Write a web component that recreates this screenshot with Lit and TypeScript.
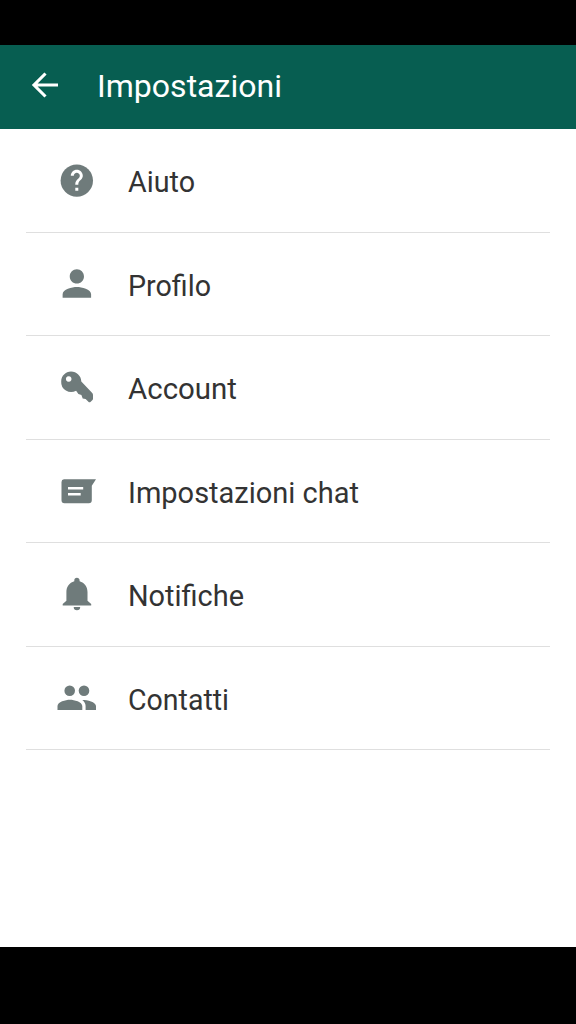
import { LitElement, html, css, svg } from "lit";
import { customElement } from "lit/decorators.js";

const rows = [
  { label: "Aiuto", w: 67, icon: svg`<circle cx="26.8" cy="26.600" r="16.200"/><path class="mark" transform="translate(8.8 8.300) scale(1.5)" d="M13 19h-2v-2h2v2zm2.070-7.750l-.9.920C13.450 12.900 13 13.500 13 15h-2v-.5c0-1.100.450-2.100 1.170-2.830l1.240-1.260c.370-.360.590-.860.590-1.410 0-1.100-.9-2-2-2s-2 .9-2 2H8c0-2.210 1.790-4 4-4s4 1.790 4 4c0 .880-.360 1.680-.930 2.250z"/>` },
  { label: "Profilo", w: 83, icon: svg`<path transform="translate(5.500 4.200) scale(1.780)" d="M12 12c2.210 0 4-1.790 4-4s-1.790-4-4-4-4 1.790-4 4 1.790 4 4 4zm0 2c-2.670 0-8 1.340-8 4v2h16v-2c0-2.660-5.330-4-8-4z"/>` },
  { label: "Account", w: 109, icon: svg`<path fill-rule="evenodd" d="M21 10.600c5.600 0 10.300 4.400 10.300 10L42 31.700q1 1 1 2.300v3.500q0 1.300-1 2l-1.300 1.300q-1.300 1-2.300 0L35.600 37.900l-2.900-.5-1.300-3.500-3-.9-2.300-3.300A10 10 0 0 1 11.200 20.400c0-5.400 4.400-9.800 9.800-9.800zM18.700 15.200a2.800 2.800 0 1 0 .01 0z"/>` },
  { label: "Impostazioni chat", w: 231, icon: svg`<path fill-rule="evenodd" d="M14 14.200H46L41.800 20.800V35.200a3 3 0 0 1-3 3H14.500a3 3 0 0 1-3-3V17a2.800 2.800 0 0 1 2.500-2.800zM18 22v2.500h15.200V22zM18 27.900v2.500h12.700v-2.500z"/>` },
  { label: "Notifiche", w: 116, icon: svg`<path d="M26.900 9.700c1.600 0 2.700 1.100 2.700 2.700v.8c5 1.500 7.900 5.500 7.900 10.800v8.700l3.700 3.300v1.500H12.700V36l3.700-3.300V24c0-5.300 2.900-9.300 7.900-10.800v-.8c0-1.600 1-2.700 2.600-2.700zM23.700 39h6.500a3.250 3.250 0 0 1-6.500 0z"/>` },
  { label: "Contatti", w: 101, icon: svg`<circle cx="19.700" cy="18.700" r="5.300"/><circle cx="34" cy="18.700" r="5.300"/><path d="M7.500 38.100v-4c0-4.300 8.200-6.400 12.400-6.400s12.400 2.100 12.400 6.400v4zM35.600 38.100v-4c0-2.700-1.300-4.700-3.300-6.200 5 0 13.700 1.900 13.700 6.200v4z"/>` },
];

@customElement("app-root")
export class AppRoot extends LitElement {
  static styles = css`
    :host { display: flex; flex-direction: column; height: 1024px; background: #fff; font-family: Roboto, sans-serif; overflow: hidden; }
    .top { height: 45px; background: #000; flex: none; }
    .bar { height: 84px; background: #075e51; display: flex; align-items: center; flex: none; }
    .back { width: 28px; height: 28px; margin-left: 31px; margin-right: 37.500px; margin-top: -4px; }
    .text { height: 48px; overflow: visible; }
    .title { font-size: 32px; fill: #fff; }
    .list { flex: 1; padding: 0 26px; }
    .row { box-sizing: border-box; height: 103.500px; border-bottom: 1px solid #dfdfdf; display: flex; align-items: center; }
    .icon { width: 52px; height: 52px; margin-left: 24px; margin-right: 26px; fill: #6f7b7b; }
    .mark { fill: #fff; }
    .label { font-size: 29px; fill: #333; }
    .bottom { height: 77px; background: #000; flex: none; }
  `;
  render() {
    return html`
      <div class="top"></div>
      <header class="bar">
        <svg class="back" viewBox="0 0 28 28" fill="none" stroke="#fff" stroke-width="3.100"><path d="M27 14H3M14.500 2.500L3 14L14.500 25.500"/></svg>
        <svg class="text" width="200" height="48"><text class="title" x="0" y="34" textLength="185" lengthAdjust="spacingAndGlyphs">Impostazioni</text></svg>
      </header>
      <main class="list">
        ${rows.map((r) => html`<div class="row">
          <svg class="icon" viewBox="0 0 52 52">${r.icon}</svg>
          <svg class="text" width="300" height="48"><text class="label" x="0" y="35.700" textLength=${r.w} lengthAdjust="spacingAndGlyphs">${r.label}</text></svg>
        </div>`)}
      </main>
      <div class="bottom"></div>
    `;
  }
}
